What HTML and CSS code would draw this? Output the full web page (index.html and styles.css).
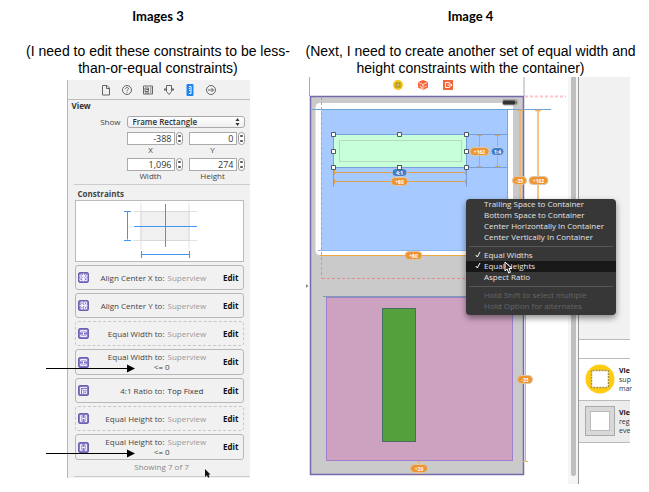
FILE: index.html
```html
<!DOCTYPE html>
<html lang="en">
<head>
<meta charset="utf-8">
<title>Editing constraints</title>
<link rel="stylesheet" href="styles.css">
</head>
<body>
<main class="page">
  <section class="step">
    <h2 class="step-title">Images 3</h2>
    <p class="caption">(I need to edit these constraints to be less-than-or-equal constraints)</p>
    <div class="inspector">
      <nav class="tabs">
        <button class="tab" aria-label="File"><svg width="12" height="12" viewBox="0 0 12 12"><path d="M2.500 1.500h4.500l2.500 2.500v7h-7zM6.500 1.500v3h3"/></svg></button>
        <button class="tab" aria-label="Help"><svg width="12" height="12" viewBox="0 0 12 12"><circle cx="6" cy="6" r="4.500"/><path d="M4.500 5c0-2 3-2 3-.3 0 1-1.500 1-1.500 2.200M6 7.800v1"/></svg></button>
        <button class="tab" aria-label="Identity"><svg width="12" height="12" viewBox="0 0 12 12"><path d="M1.500 2h9v8h-9zM3 4h3.500v3.500H3zM8 4h1.500M8 6h1.500M8 8h1.500M3 9h4M4 5.500h2"/></svg></button>
        <button class="tab" aria-label="Attributes"><svg width="12" height="12" viewBox="0 0 12 12"><path d="M3.500 1.500h5v6L6 10.500 3.500 7.500zM1 5.500h2M9 5.500h2M2 4v3M10 4v3"/></svg></button>
        <button class="tab tab-on" aria-label="Size"><svg width="12" height="12" viewBox="0 0 12 12"><path class="ruler" d="M3 .5h6v11H3z"/><path class="ticks" d="M5 2.500h2v7H5M5 4.500h1M5 6.500h1"/></svg></button>
        <button class="tab" aria-label="Connections"><svg width="12" height="12" viewBox="0 0 12 12"><circle cx="6" cy="6" r="4.500"/><path d="M3 6h5.500M6.500 4l2 2-2 2"/></svg></button>
      </nav>
      <h3 class="view-title">View</h3>
      <div class="fields">
        <label class="show-label" for="show">Show</label>
        <div class="select-box">
          <select id="show"><option>Frame Rectangle</option></select>
          <svg class="select-mark" width="5" height="8" viewBox="0 0 5 8"><path d="M2.500 0L4.500 3h-4zM2.500 8L4.500 5h-4z" fill="#333"/></svg>
        </div>
        <div class="field">
          <input id="fx" value="-388"><span class="stepper"><button aria-label="Increase X"></button><button aria-label="Decrease X"></button></span>
          <label for="fx">X</label>
        </div>
        <div class="field">
          <input id="fy" value="0"><span class="stepper"><button aria-label="Increase Y"></button><button aria-label="Decrease Y"></button></span>
          <label for="fy">Y</label>
        </div>
        <div class="field field-lower">
          <input id="fw" value="1,096"><span class="stepper"><button aria-label="Increase width"></button><button aria-label="Decrease width"></button></span>
          <label for="fw">Width</label>
        </div>
        <div class="field field-lower">
          <input id="fh" value="274"><span class="stepper"><button aria-label="Increase height"></button><button aria-label="Decrease height"></button></span>
          <label for="fh">Height</label>
        </div>
      </div>
      <h3 class="constraints-title">Constraints</h3>
      <div class="preview">
        <svg width="76" height="60" viewBox="0 1 76 60" fill="none">
          <path d="M20 3v46M68 3v46M12 11.500h64M12 40.500h64" stroke="#e2e2e2"/>
          <rect x="20" y="11.500" width="48" height="29" fill="#f0f0f0" stroke="#d8d8d8"/>
          <path d="M44.500 4v43M13 26.500h63M6.500 11.500v28M3 11.500h7M3 40.500h7M20.500 54.500h48M20.500 51v7M68.500 51v7" stroke="#3f96f5"/>
        </svg>
      </div>
      <ul class="rows">
        <li class="row"><svg class="badge" viewBox="0 0 11 11"><rect x=".5" y=".5" width="10" height="10" rx="1.500"/><path d="M2 3h2.500v2H2zM2 6h2.500v2.500H2zM6.500 3H9v2H6.500zM6.500 6H9v2.500H6.500zM5.500 1.500v8"/></svg><span class="name">Align Center X to:</span><span class="target">Superview</span><button class="edit">Edit</button></li>
        <li class="row"><svg class="badge" viewBox="0 0 11 11"><rect x=".5" y=".5" width="10" height="10" rx="1.500"/><path d="M3 2h2v2.500H3zM6.500 2h2v2.500h-2zM3 6.500h2V9H3zM6.500 6.500h2V9h-2zM1.500 5.500h8"/></svg><span class="name">Align Center Y to:</span><span class="target">Superview</span><button class="edit">Edit</button></li>
        <li class="row row-dashed"><svg class="badge" viewBox="0 0 11 11"><rect x=".5" y=".5" width="10" height="10" rx="1.500"/><path d="M2.500 2.500h6v1.500h-6zM2.500 7h6v1.500h-6zM5.500 4v3"/></svg><span class="name">Equal Width to:</span><span class="target">Superview</span><button class="edit">Edit</button></li>
        <li class="row row-double"><svg class="badge" viewBox="0 0 11 11"><rect x=".5" y=".5" width="10" height="10" rx="1.500"/><path d="M2.500 2.500h6v1.500h-6zM2.500 7h6v1.500h-6zM5.500 4v3"/></svg><span class="name">Equal Width to:</span><span class="target">Superview</span><span class="relation">&lt;= 0</span><button class="edit">Edit</button>
          <svg class="arrow" width="90" height="10" viewBox="0 0 90 10"><path d="M0 5.500h83" stroke="#000"/><path d="M81 1.500l8 4-8 4z"/></svg></li>
        <li class="row"><svg class="badge" viewBox="0 0 11 11"><rect x=".5" y=".5" width="10" height="10" rx="1.500"/><path d="M2.500 9V2.500h6.500M4.500 9V4.500H9M6 6h2.500v2.500H6z"/></svg><span class="name">4:1 Ratio to:</span><span class="target target-dark">Top Fixed</span><button class="edit">Edit</button></li>
        <li class="row row-dashed"><svg class="badge" viewBox="0 0 11 11"><rect x=".5" y=".5" width="10" height="10" rx="1.500"/><path d="M2.500 2.500h1.500v6H2.500zM7 2.500h1.500v6H7zM4 5.500h3"/></svg><span class="name">Equal Height to:</span><span class="target">Superview</span><button class="edit">Edit</button></li>
        <li class="row row-double"><svg class="badge" viewBox="0 0 11 11"><rect x=".5" y=".5" width="10" height="10" rx="1.500"/><path d="M2.500 2.500h1.500v6H2.500zM7 2.500h1.500v6H7zM4 5.500h3"/></svg><span class="name">Equal Height to:</span><span class="target">Superview</span><span class="relation">&lt;= 0</span><button class="edit">Edit</button>
          <svg class="arrow" width="90" height="10" viewBox="0 0 90 10"><path d="M0 5.500h83" stroke="#000"/><path d="M81 1.500l8 4-8 4z"/></svg></li>
      </ul>
      <p class="count">Showing 7 of 7</p>
      <svg class="pointer" width="8" height="9" viewBox="0 0 8 9"><path d="M1 0l5.500 5.500-2 .2L5.500 8 4 8.700 3 6.300 1 8z"/></svg>
    </div>
  </section>

  <section class="step">
    <h2 class="step-title">Image 4</h2>
    <p class="caption">(Next, I need to create another set of equal width and height constraints with the container)</p>
    <div class="editor">
      <svg class="canvas" width="262" height="407" viewBox="306 77 262 407" fill="none">
        <path d="M309.500 77v19" stroke="#aaa"/><path d="M524 77v19" stroke="#aaa"/>
        <g>
          <circle cx="398" cy="85" r="5" fill="#f5c518"/><rect x="396" y="83" width="4" height="4" fill="#cbb765" stroke="#a58a22"/>
          <path d="M423 80l5 2v5.500l-5 2.500-5-2.500V82z" fill="#f4653a"/><path d="M418.500 82.500l4.500 2 4.500-2M423 84.500V90M419.500 86l2 1v2M424.500 87l2-1" stroke="#fff" stroke-width=".8"/>
          <rect x="443" y="80" width="10" height="10" fill="#f4653a"/><path d="M449.500 82.500h-4v5h4v-1.200M449.500 82.500v1.200M447.500 85h4.500M450.500 83.500L452 85l-1.500 1.500" stroke="#fff"/>
        </g>
        <rect x="310.500" y="96.500" width="213" height="378" fill="#cacaca" stroke="#7568ad" stroke-width="1.500"/>
        <path d="M320 103h189a4 4 0 0 1 4 4v148H320a4.500 4.500 0 0 1-4.500-4.500v-143A4.500 4.500 0 0 1 320 103z" fill="#fff"/>
        <rect x="321" y="109" width="187" height="141" fill="#a6c9ff"/>
        <path d="M507.500 110v140" stroke="#9994f0"/>
        <path d="M318 250.500h190" stroke="#8bb7e6"/>
        <path d="M310 109.500h241" stroke="#69a3d8"/>
        <path d="M525 96.500h41" stroke="#ffc4c8" stroke-width="2" stroke-dasharray="3 2"/>
        <path d="M321.500 97v181M322 278.500h191" stroke="#e08d98" stroke-dasharray="3 2"/>
        <path d="M311 96.500h213" stroke="#7568ad"/>
        <path d="M320 255.500h203" stroke="#f0a844"/>
        <rect x="502" y="99" width="16" height="6.500" rx="3.200" fill="#a5a5a5"/><rect x="503" y="100.500" width="12" height="4" rx="1" fill="#333"/><path d="M516 101.500v2" stroke="#333"/>
        <rect x="326.500" y="297.500" width="186" height="163" fill="#cda2c0" stroke="#a07fcf"/>
        <path d="M323 296.500h190" stroke="#7c9db5"/>
        <rect x="382.500" y="308.500" width="33" height="133" fill="#54a03d" stroke="#466f62"/>
        <path d="M334 134.500h174M334 167.500h174M333.500 135v52M466.500 135v52" stroke="#76a0db"/>
        <rect x="334" y="135" width="132" height="32" fill="#c6ffda"/>
        <rect x="339.500" y="140.500" width="122" height="21" stroke="#b8d9bd"/>
        <g stroke="#dfa14d">
          <path d="M334 172.500h132M334.500 170v5M465.500 170v5M334 181.500h132M334.500 179v5M465.500 179v5"/>
          <path d="M479.500 135v32M477 135.500h5M477 166.500h5M497.500 135v32M495 135.500h5M495 166.500h5"/>
          <path d="M520 110v91M517 110.500h6M538 110v91M535 110.500h6" stroke="#f3b259" stroke-width="1.500"/>
          <path d="M525.500 310v151M523 461.500h5M419 461v13M417 461.500h4M417 473.500h4" stroke="#f3b259"/>
        </g>
        <g fill="#fff" stroke="#4b5b61">
          <path d="M331.500 132.500h4v4h-4zM397.500 132.500h4v4h-4zM464.500 132.500h4v4h-4zM331.500 149.500h4v4h-4zM464.500 149.500h4v4h-4zM331.500 165.500h4v4h-4zM464.500 165.500h4v4h-4z"/>
        </g>
        <g class="pins">
          <rect class="blue" x="392" y="168.500" width="15" height="8" rx="4"/><text x="399.500" y="175">4:1</text>
          <rect x="391" y="177.500" width="17" height="8" rx="4"/><text x="399.500" y="184">+80</text>
          <rect x="470" y="147.500" width="19" height="8" rx="4"/><text x="479.500" y="154">+162</text>
          <rect class="blue" x="491" y="147.500" width="13" height="8" rx="4"/><text x="497.500" y="154">1:4</text>
          <rect x="512.500" y="176.500" width="14" height="8" rx="4"/><text x="519.500" y="183">-35</text>
          <rect x="529" y="176.500" width="19" height="8" rx="4"/><text x="538.500" y="183">+162</text>
          <rect x="405" y="251.500" width="17" height="8" rx="4"/><text x="413.500" y="258">+80</text>
          <rect x="517.500" y="375.500" width="15" height="8" rx="4"/><text x="525" y="382">-35</text>
          <rect x="410.500" y="464.500" width="17" height="8" rx="4"/><text x="419" y="471">+20</text>
        </g>
        <rect x="397.500" y="165.500" width="4" height="4" fill="#fff" stroke="#4b5b61"/>
        <path d="M306 284l2.500 2-2.500 2z" fill="#888"/>
      </svg>
      <div class="scroll"><div class="thumb"></div></div>
      <aside class="library">
        <div class="library-top"></div>
        <div class="library-gap"></div>
        <article class="item">
          <svg width="30" height="30" viewBox="0 0 30 30"><circle cx="15" cy="15" r="14.500" fill="#ffcc11"/><rect x="6.500" y="6.500" width="17" height="17" rx="1" fill="#fff" stroke="#a49245" stroke-width="1.500" stroke-dasharray="2 1"/></svg>
          <p><b>Vie</b><br>sup<br>mar</p>
        </article>
        <article class="item item-gray">
          <svg width="30" height="30" viewBox="0 0 30 30"><rect x=".5" y=".5" width="29" height="29" fill="#d8d8d8" stroke="#aaa"/><rect x="5.500" y="5.500" width="19" height="19" fill="#fff" stroke="#bbb"/></svg>
          <p><b>Vie</b><br>reg<br>eve</p>
        </article>
      </aside>
      <div class="menu" role="menu">
        <button role="menuitem">Trailing Space to Container</button>
        <button role="menuitem">Bottom Space to Container</button>
        <button role="menuitem">Center Horizontally In Container</button>
        <button role="menuitem">Center Vertically In Container</button>
        <hr>
        <button role="menuitem"><svg class="check" viewBox="0 0 6 7"><path d="M.8 4l1.500 2L5 1"/></svg>Equal Widths</button>
        <button role="menuitem" class="active"><svg class="check" viewBox="0 0 6 7"><path d="M.8 4l1.500 2L5 1"/></svg>Equal Heights<svg class="cursor" width="9" height="13" viewBox="0 0 9 13"><path d="M1 1v9l2.200-2 1.500 4 1.800-.8L5 7.500h3z" fill="#222" stroke="#fff"/></svg></button>
        <button role="menuitem">Aspect Ratio</button>
        <hr>
        <button role="menuitem" disabled>Hold Shift to select multiple</button>
        <button role="menuitem" disabled>Hold Option for alternates</button>
      </div>
    </div>
  </section>
</main>
</body>
</html>
```
FILE: styles.css
```css
* { box-sizing: border-box; }
body { margin: 0; background: #fff; color: #000; font-family: "Liberation Sans", Arial, sans-serif; }
h2, h3, p, ul { margin: 0; padding: 0; }
svg { display: block; flex: none; }
button, input, select { margin: 0; padding: 0; border: 0; background: none; font: inherit; color: inherit; }

.page { display: grid; grid-template-columns: 294fr 331fr; padding: 8px 13px 0 11px; }
.step-title { font: bold 13px/17px Lato, "Open Sans", sans-serif; text-align: center; }
.caption { margin-top: 18px; font-size: 14px; line-height: 17px; text-align: center; }

.inspector { position: relative; max-width: 183px; margin: 3px auto 0; padding-bottom: 1px; border-left: 1px solid #b5b5b5; background: #f1f1f1; color: #444; font: 8px/10px "Open Sans", sans-serif; }
.tabs { display: flex; justify-content: center; height: 20px; border-bottom: 1px solid #bdbdbd; }
.tab { display: flex; width: 21px; align-items: center; justify-content: center; }
.tab svg { fill: none; stroke: #666; }
.tab-on .ruler { fill: #1f86f0; stroke: #1f86f0; }
.tab-on .ticks { stroke: #fff; }
.view-title { padding: 1px 4px 0; font-size: 8px; line-height: 10px; color: #333; }
.fields { display: grid; grid-template-columns: 46px 56px 56px; column-gap: 6px; justify-content: end; padding: 5px 5px 3px 0; margin: 0 0 0 6px; border-bottom: 1px solid #ccc; }
.show-label { line-height: 12px; text-align: right; }
.select-box { position: relative; grid-column: 2 / 4; }
.select-box select { display: block; width: 100%; height: 12px; padding-left: 5px; appearance: none; border: 1px solid #aaa; border-radius: 3px; background: linear-gradient(#fff, #eee); font-size: 8px; font-weight: 600; line-height: 10px; color: #333; }
.select-mark { position: absolute; right: 5px; top: 2px; }
.field { display: grid; grid-template-columns: 1fr 7px; column-gap: 1px; margin-top: 4px; }
.field:nth-of-type(even) { grid-column: 2; }
.field-lower { margin-top: 3px; }
.field input { width: 100%; height: 13px; padding-right: 2px; border: 1px solid #aaa; background: #fff; text-align: right; font-size: 9px; line-height: 11px; color: #333; }
.field label { text-align: center; }
.stepper { display: grid; height: 13px; padding: 2px 1px; border: 1px solid #999; border-radius: 4px; background: #fff; justify-items: center; align-content: space-between; }
.stepper button { width: 3px; height: 2px; background: #555; border-radius: 1px; }
.constraints-title { padding: 4px 10px 0; font-size: 8px; line-height: 10px; color: #444; }
.preview { display: flex; justify-content: center; margin: 1px 6px 0 7px; border: 1px solid #bbb; background: #fff; }
.rows { display: grid; gap: 3px; margin: 3px 6px 0 7px; list-style: none; }
.row { position: relative; display: grid; grid-template-columns: 11px 73px 1fr auto; column-gap: 3px; align-items: center; min-height: 25px; padding: 0 4px 0 2px; border: 1px solid #b8b8b8; border-radius: 3px; }
.row-dashed { border-style: dashed; border-color: #c8c8c8; }
.row-double { min-height: 26px; align-content: center; }
.badge { width: 11px; height: 11px; fill: none; stroke: #eeeaff; }
.badge rect { fill: #8478c8; stroke: #6c62ae; }
.row-double .badge, .row-double .edit { grid-row: 1 / 3; }
.row-double .edit { grid-column: 4; }
.name { text-align: right; white-space: nowrap; }
.target { color: #999; white-space: nowrap; }
.target-dark { color: #333; }
.relation { grid-column: 2 / 4; grid-row: 2; padding-left: 12px; text-align: center; }
.edit { font-weight: bold; color: #111; }
.arrow { position: absolute; left: -30px; top: 13px; }
.count { margin-top: 2px; padding-bottom: 4px; margin-left: 6px; border-bottom: 1px solid #ccc; text-align: center; color: #888; }
.pointer { position: absolute; right: 38px; bottom: 0; fill: #111; }

.editor { position: relative; display: flex; max-width: 325px; margin: 0 auto 0 1px; font: 8px/9px "Open Sans", sans-serif; }
.pins rect { fill: #ee9430; stroke: #dcc6a8; }
.pins .blue { fill: #3f7fc9; stroke: #b8cbe2; }
.pins text { fill: #fff; font: bold 5px "Open Sans", sans-serif; text-anchor: middle; }
.scroll { width: 10px; padding: 0 2px 8px 3px; background: #f5f5f5; }
.thumb { height: 100%; border-radius: 0 0 3px 3px; background: #bfbfbf; }
.library { display: flex; flex: 1; flex-direction: column; min-width: 0; margin-right: 1px; border-left: 1px solid #999; }
.library-top { height: 263px; border-bottom: 1px solid #bbb; background: #f1f1f1; }
.library-gap { height: 19px; border-bottom: 1px solid #bbb; }
.item { display: flex; gap: 4px; height: 42px; padding: 5px 0 0 6px; border-bottom: 1px solid #bbb; color: #333; font-size: 7px; white-space: nowrap; }
.item b { color: #111; }
.item p { padding-top: 2px; }
.item-gray { background: #ececec; }
.menu { position: absolute; left: 160px; top: 122px; width: 150px; padding-bottom: 3px; border-radius: 4px; background: #373737; box-shadow: 0 3px 6px rgba(0, 0, 0, .45); color: #e4e4e4; }
.menu button { position: relative; display: block; width: 100%; height: 11px; padding-left: 18px; text-align: left; line-height: 9px; padding-bottom: 2px; white-space: nowrap; }
.menu button:disabled { color: #666; }
.menu .active { background: #181818; }
.menu hr { height: 1px; margin: 3px 3px; border: 0; background: #585858; }
.check { position: absolute; left: 9px; top: 1px; width: 6px; height: 7px; fill: none; stroke: #fff; }
.cursor { position: absolute; left: 38px; top: 0; z-index: 1; }
```
